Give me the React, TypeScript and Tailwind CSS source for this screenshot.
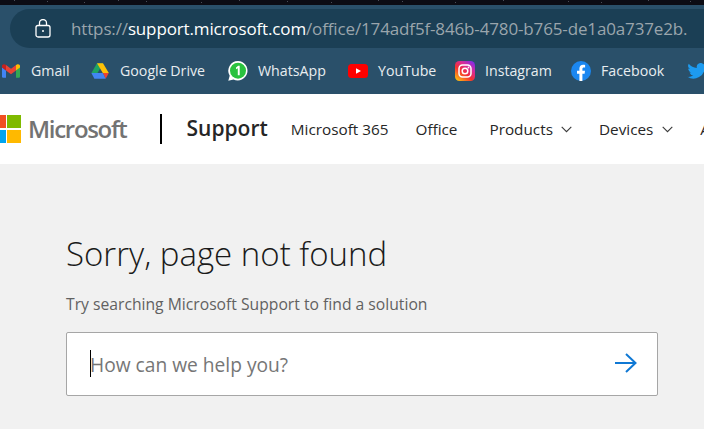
import React from 'react';

const GmailIcon = () => (
  <svg width="18" height="14" viewBox="0 0 18 14" className="shrink-0">
    <path d="M0 3v9.500a1.200 1.200 0 0 0 1.200 1.200H4V6.500z" fill="#4285f4" />
    <path d="M14 6.500v7.200h2.800a1.200 1.200 0 0 0 1.200-1.200V3z" fill="#34a853" />
    <path d="M14 1v5.500L18 3.500V2C18 .5 16.200-.3 15 .6z" fill="#fbbc04" />
    <path d="M4 6.500V1l5 3.800L14 1v5.500L9 10.300z" fill="#ea4335" />
    <path d="M0 2v1.500L4 6.500V1L3 .6C1.800-.3 0 .5 0 2z" fill="#c5221f" />
  </svg>
);

const DriveIcon = () => (
  <svg width="18" height="16" viewBox="0 0 18 16" className="shrink-0">
    <path d="M6 .2h6L6.500 10H.4z" fill="#1fa463" />
    <path d="M12 .2 17.800 10h-6L6 .2z" fill="#ffc107" />
    <path d="M17.800 10H11.800L14.700 15.800z" fill="#ea4335" />
    <path d="M3.400 15.800h11.300L11.800 10H6.200L.4 10z" fill="#4285f4" />
  </svg>
);

const WhatsAppIcon = () => (
  <svg width="20" height="20" viewBox="0 0 20 20" className="shrink-0">
    <path d="M10 0a9.700 9.700 0 0 0-8.300 14.700L.3 19.700l5.200-1.300A9.700 9.700 0 1 0 10 0z" fill="#fff" />
    <circle cx="10" cy="9.700" r="8" fill="#29c23f" />
    <path d="M10.200 4.800h1.500v9.400H9.800V7.200L8 8.200V6.400z" fill="#fff" />
  </svg>
);

const YouTubeIcon = () => (
  <svg width="20" height="14" viewBox="0 0 20 14" className="shrink-0">
    <rect width="20" height="14" rx="3.500" fill="#f00" />
    <path d="M8 4.200 13 7 8 9.800z" fill="#fff" />
  </svg>
);

const InstagramIcon = () => (
  <svg width="20" height="20" viewBox="0 0 20 20" className="shrink-0">
    <defs>
      <linearGradient id="ig" x1="0.1" y1="1" x2="0.9" y2="0">
        <stop offset="0" stopColor="#fdc50f" />
        <stop offset="0.4" stopColor="#f5312f" />
        <stop offset="0.7" stopColor="#d62a9a" />
        <stop offset="1" stopColor="#7b2cf0" />
      </linearGradient>
    </defs>
    <rect width="20" height="20" rx="4.500" fill="url(#ig)" />
    <rect x="4" y="4" width="12" height="12" rx="3.500" fill="none" stroke="#fff" strokeWidth="1.500" />
    <circle cx="10" cy="10" r="2.800" fill="none" stroke="#fff" strokeWidth="1.500" />
    <circle cx="13.500" cy="6.500" r="0.900" fill="#fff" />
  </svg>
);

const FacebookIcon = () => (
  <svg width="20" height="20" viewBox="0 0 20 20" className="shrink-0">
    <circle cx="10" cy="10" r="10" fill="#1b87f0" />
    <path d="M8.400 20v-7.200H6v-3h2.400V7.600c0-2.500 1.500-3.900 3.700-3.900 1 0 2 .2 2 .2v2.500h-1.200c-1.200 0-1.500.7-1.500 1.500v1.900h2.600l-.4 3h-2.200V20z" fill="#fff" />
  </svg>
);

const TwitterIcon = () => (
  <svg width="20" height="16" viewBox="0 0 24 20" className="shrink-0">
    <path d="M24 2.400a9.800 9.800 0 0 1-2.800.8A5 5 0 0 0 23.300.5a9.800 9.800 0 0 1-3.100 1.200 4.900 4.900 0 0 0-8.400 4.500A14 14 0 0 1 1.700.9a4.900 4.900 0 0 0 1.500 6.600 4.900 4.900 0 0 1-2.200-.6c0 2.400 1.700 4.400 3.900 4.900a5 5 0 0 1-2.200.1 4.900 4.900 0 0 0 4.600 3.400A9.900 9.900 0 0 1 0 17.300 14 14 0 0 0 21.500 4.900 10 10 0 0 0 24 2.400z" fill="#1d9bf0" />
  </svg>
);

const Chevron = () => (
  <svg width="11" height="7" viewBox="0 0 11 7" className="shrink-0">
    <path d="M.7.900 5.500 5.700 10.300.900" fill="none" stroke="#3a3a3a" strokeWidth="1.100" />
  </svg>
);

// wallpaper specks showing above the browser toolbar
const stars = [14, 47, 84, 118, 146, 201, 239, 287, 331, 378, 402, 455, 503, 568, 601, 648, 690];

const bookmarks = [
  { name: 'Gmail', icon: <GmailIcon />, width: 'w-[89px]', gap: 'gap-[11px]' },
  { name: 'Google Drive', icon: <DriveIcon />, width: 'w-[137px]', gap: 'gap-[11px]' },
  { name: 'WhatsApp', icon: <WhatsAppIcon />, width: 'w-[120px]', gap: 'gap-[10px]' },
  { name: 'YouTube', icon: <YouTubeIcon />, width: 'w-[107px]', gap: 'gap-[10px]' },
  { name: 'Instagram', icon: <InstagramIcon />, width: 'w-[116px]', gap: 'gap-[10px]' },
  { name: 'Facebook', icon: <FacebookIcon />, width: 'w-[116px]', gap: 'gap-[10px]' },
];

export default function App() {
  return (
    <div className="h-[429px] w-[704px] overflow-hidden bg-[#f1f1f1] font-['Open_Sans',sans-serif]">
      {/* browser chrome */}
      <svg width="704" height="5" className="block bg-[#0c0c14]">
        {stars.map((x, i) => (
          <rect key={x} x={x} y={i % 3} width="1" height="1" fill="#4a4d58" />
        ))}
      </svg>
      <div className="h-[43px] bg-[#2a506a] pl-[10px] pt-[4px]">
        <div className="flex h-[39px] items-center rounded-l-[20px] bg-[#1b3f55] pl-[25px] text-[17px] tracking-[-0.14px] whitespace-nowrap text-[#9aa5ac]">
          <svg width="16" height="19" viewBox="0 0 16 19" className="mr-[20px] shrink-0">
            <rect x="1" y="6.500" width="14" height="11.500" rx="2" fill="none" stroke="#fff" strokeWidth="1.300" />
            <path d="M4.500 6.500V4a3.500 3.500 0 0 1 7 0v2.500" fill="none" stroke="#fff" strokeWidth="1.300" />
            <circle cx="8" cy="12" r="1" fill="#fff" />
          </svg>
          <span>https://</span>
          <span className="text-white">support.microsoft.com</span>
          <span>/office/174adf5f-846b-4780-b765-de1a0a737e2b.</span>
        </div>
      </div>
      <div className="flex h-[46px] items-center bg-[#2a506a] pl-[2px] text-[14.2px] whitespace-nowrap text-[#e8edf0]">
        {bookmarks.map(b => (
          <div key={b.name} className={`flex shrink-0 items-center ${b.width} ${b.gap}`}>
            {b.icon}
            <span>{b.name}</span>
          </div>
        ))}
        <TwitterIcon />
      </div>
      {/* site header */}
      <div className="flex h-[70px] items-center bg-white whitespace-nowrap">
        <svg width="21" height="28" viewBox="8 0 21 28" className="shrink-0">
          <rect x="0" y="0" width="14" height="13" fill="#f25022" />
          <rect x="15" y="0" width="14" height="13" fill="#7fba00" />
          <rect x="0" y="15" width="14" height="13" fill="#00a4ef" />
          <rect x="15" y="15" width="14" height="13" fill="#ffb900" />
        </svg>
        <span className="ml-[7px] text-[24px] font-semibold tracking-[-1.3px] text-[#737373]">Microsoft</span>
        <div className="ml-[33px] h-[30px] w-[2px] shrink-0 bg-black" />
        <span className="ml-[25px] text-[21px] font-semibold text-[#262626]">Support</span>
        <nav className="ml-[23px] flex items-center text-[15.3px] text-[#262626]">
          <span>Microsoft 365</span>
          <span className="ml-[27px]">Office</span>
          <span className="ml-[32px]">Products</span>
          <span className="ml-[8px]"><Chevron /></span>
          <span className="ml-[27px]">Devices</span>
          <span className="ml-[9px]"><Chevron /></span>
          <span className="ml-[27px]">Account</span>
        </nav>
      </div>
      {/* not found body */}
      <div className="px-[66px] pt-[66px]">
        <h1 className="text-[33px] leading-[48px] font-light text-[#1a1a1a]">Sorry, page not found</h1>
        <p className="mt-[12px] text-[15.7px] leading-[28px] text-[#616161]">Try searching Microsoft Support to find a solution</p>
        <div className="mt-[14px] flex h-[64px] w-[592px] items-center justify-between rounded-[2px] border border-[#a6a6a6] bg-white pr-[20px] pl-[23px]">
          <div className="flex items-center">
            <div className="h-[27px] w-px bg-black" />
            <span className="mt-[2px] -ml-px text-[19.2px] text-[#767676]">How can we help you?</span>
          </div>
          <svg width="22" height="20" viewBox="0 0 22 20" className="mb-[2px] shrink-0">
            <path d="M0 10h20.500M11 1l9.500 9-9.500 9" fill="none" stroke="#0f78d4" strokeWidth="2" />
          </svg>
        </div>
      </div>
    </div>
  );
}
